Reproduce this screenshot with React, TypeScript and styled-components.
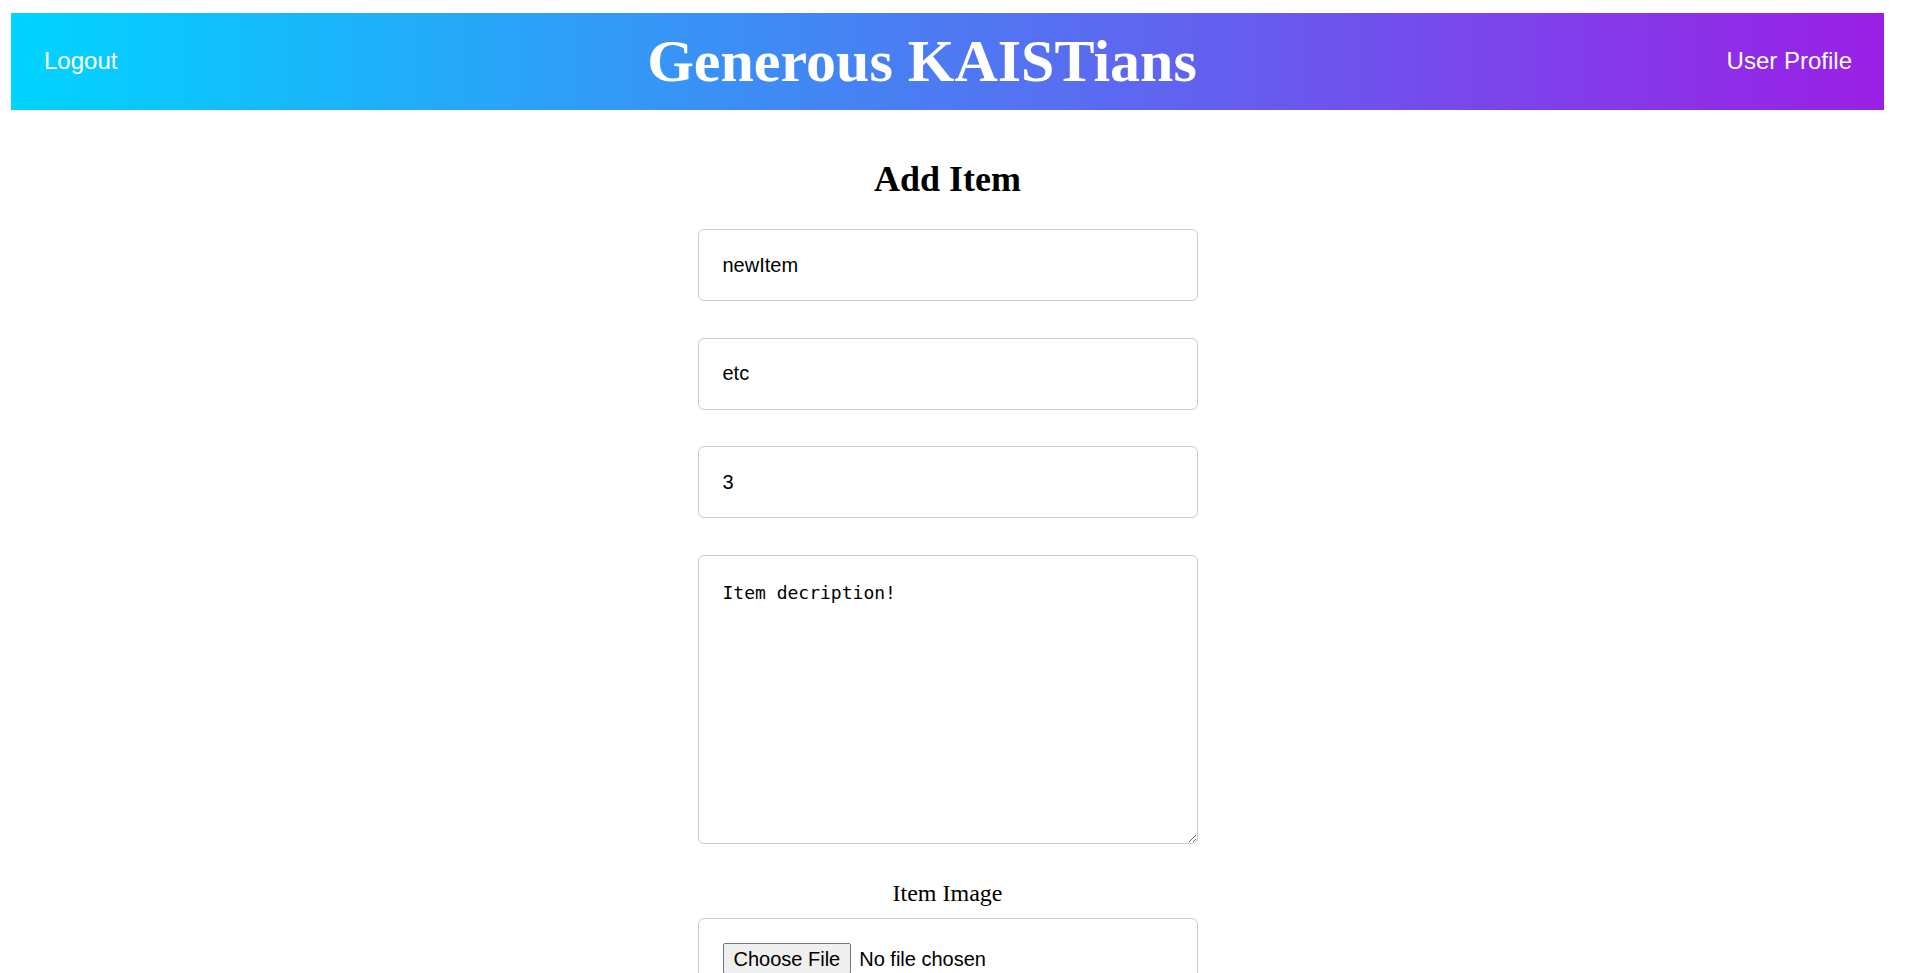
import React from "react";
import styled, { createGlobalStyle } from "styled-components";

const GlobalStyle = createGlobalStyle`
  html, body {
    background: #ffffff;
  }
  body {
    margin: 13px 34px 0 11px;
    font-family: "Liberation Serif", "Times New Roman", serif;
    color: #000;
  }
  * {
    box-sizing: border-box;
  }
`;

const Header = styled.header`
  height: 97px;
  display: flex;
  align-items: center;
  justify-content: space-between;
  padding: 0 32px 0 33px;
  background: linear-gradient(90deg, #00d4ff 0%, #9b1fe6 100%);
  color: #ffffff;
`;

const NavLink = styled.a`
  font-family: "Liberation Sans", Arial, sans-serif;
  font-size: 24px;
  line-height: 26px;
  margin-bottom: 2px;
  color: #ffffff;
  text-decoration: none;
  cursor: pointer;
`;

const Brand = styled.h1`
  margin: 0;
  font-family: "Liberation Serif", "Times New Roman", serif;
  font-weight: 700;
  font-size: 60px;
  color: #ffffff;
`;

const Main = styled.main`
  display: flex;
  flex-direction: column;
  align-items: center;
  padding-bottom: 40px;
`;

const Title = styled.h2`
  margin: 48px 0 29px;
  font-family: "Liberation Serif", "Times New Roman", serif;
  font-weight: 700;
  font-size: 36px;
  line-height: normal;
`;

const Form = styled.form`
  width: 500px;
  display: flex;
  flex-direction: column;
  align-items: stretch;
`;

const Field = styled.input`
  width: 100%;
  height: 72px;
  margin-bottom: 36.7px;
  padding: 0 24px;
  border: 1px solid #cccccc;
  border-radius: 6px;
  font-family: "Liberation Sans", Arial, sans-serif;
  font-size: 20px;
  color: #000000;
  background: #ffffff;
  outline: none;
`;

const TextArea = styled.textarea`
  width: 100%;
  height: 289px;
  padding: 24px;
  border: 1px solid #cccccc;
  border-radius: 6px;
  font-family: "DejaVu Sans Mono", "Liberation Mono", monospace;
  font-size: 18px;
  line-height: 26px;
  color: #000000;
  background: #ffffff;
  outline: none;
  display: block;
`;

const Label = styled.label`
  margin: 36px 0 11px;
  text-align: center;
  font-family: "Liberation Serif", "Times New Roman", serif;
  font-size: 24px;
  line-height: normal;
`;

const FileField = styled.input`
  width: 100%;
  padding: 24px;
  border: 1px solid #cccccc;
  border-radius: 6px;
  font-family: "Liberation Sans", Arial, sans-serif;
  font-size: 20px;
  color: #000000;
  background: #ffffff;

  &::file-selector-button {
    font-family: "Liberation Sans", Arial, sans-serif;
    font-size: 20px;
    padding: 4px 10px 2px;
    margin-right: 8px;
    border: 1px solid #767676;
    border-radius: 2px;
    background: #efefef;
    color: #000000;
  }
`;

export default function App() {
  return (
    <>
      <GlobalStyle />
      <Header>
        <NavLink>Logout</NavLink>
        <Brand>Generous KAISTians</Brand>
        <NavLink>User Profile</NavLink>
      </Header>
      <Main>
        <Title>Add Item</Title>
        <Form onSubmit={(e) => e.preventDefault()}>
          <Field type="text" defaultValue="newItem" />
          <Field type="text" defaultValue="etc" />
          <Field type="number" defaultValue="3" />
          <TextArea defaultValue="Item decription!" />
          <Label htmlFor="item-image">Item Image</Label>
          <FileField id="item-image" type="file" />
        </Form>
      </Main>
    </>
  );
}
